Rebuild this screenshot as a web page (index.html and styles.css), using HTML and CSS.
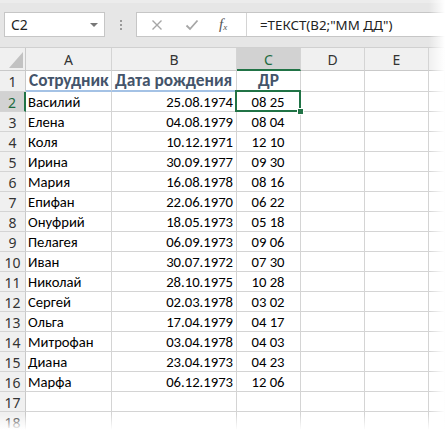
FILE: index.html
```html
<!DOCTYPE html>
<html>
<head>
<meta charset="utf-8">
<link rel="stylesheet" href="styles.css">
</head>
<body>
<div class="app">
  <div class="toolbar">
    <div class="namebox"><span class="nb-text">C2</span><span class="nb-arrow"></span></div>
    <div class="grip"><i></i><i></i><i></i></div>
    <div class="fbar">
      <div class="fbtns">
        <svg class="ico" width="12" height="12" viewBox="0 0 12 12"><path d="M1.5 1.5 L10.5 10.5 M10.5 1.5 L1.5 10.5" stroke="#a6a6a6" stroke-width="1.4" fill="none"/></svg>
        <svg class="ico ok" width="14" height="12" viewBox="0 0 14 12"><path d="M1.5 6.5 L5 10 L12.5 1.5" stroke="#a6a6a6" stroke-width="1.8" fill="none"/></svg>
        <span class="fx"><i>f</i><sub>x</sub></span>
      </div>
      <div class="finput">=ТЕКСТ(B2;"ММ ДД")</div>
    </div>
  </div>
  <div class="sheet">
    <div class="corner"><span class="tri"></span></div><div class="ch">A</div><div class="ch">B</div><div class="ch on">C</div><div class="ch">D</div><div class="ch">E</div><div class="ch"></div>

    <div class="rh">1</div><div class="c hd">Сотрудник</div><div class="c hd">Дата рождения</div><div class="c hd ctr">ДР</div><div class="c"></div><div class="c"></div><div class="c"></div>
    <div class="rh on">2</div><div class="c">Василий</div><div class="c r">25.08.1974</div><div class="c ctr sel">08 25</div><div class="c"></div><div class="c"></div><div class="c"></div>
    <div class="rh">3</div><div class="c">Елена</div><div class="c r">04.08.1979</div><div class="c ctr">08 04</div><div class="c"></div><div class="c"></div><div class="c"></div>
    <div class="rh">4</div><div class="c">Коля</div><div class="c r">10.12.1971</div><div class="c ctr">12 10</div><div class="c"></div><div class="c"></div><div class="c"></div>
    <div class="rh">5</div><div class="c">Ирина</div><div class="c r">30.09.1977</div><div class="c ctr">09 30</div><div class="c"></div><div class="c"></div><div class="c"></div>
    <div class="rh">6</div><div class="c">Мария</div><div class="c r">16.08.1978</div><div class="c ctr">08 16</div><div class="c"></div><div class="c"></div><div class="c"></div>
    <div class="rh">7</div><div class="c">Епифан</div><div class="c r">22.06.1970</div><div class="c ctr">06 22</div><div class="c"></div><div class="c"></div><div class="c"></div>
    <div class="rh">8</div><div class="c">Онуфрий</div><div class="c r">18.05.1973</div><div class="c ctr">05 18</div><div class="c"></div><div class="c"></div><div class="c"></div>
    <div class="rh">9</div><div class="c">Пелагея</div><div class="c r">06.09.1973</div><div class="c ctr">09 06</div><div class="c"></div><div class="c"></div><div class="c"></div>
    <div class="rh">10</div><div class="c">Иван</div><div class="c r">30.07.1972</div><div class="c ctr">07 30</div><div class="c"></div><div class="c"></div><div class="c"></div>
    <div class="rh">11</div><div class="c">Николай</div><div class="c r">28.10.1975</div><div class="c ctr">10 28</div><div class="c"></div><div class="c"></div><div class="c"></div>
    <div class="rh">12</div><div class="c">Сергей</div><div class="c r">02.03.1978</div><div class="c ctr">03 02</div><div class="c"></div><div class="c"></div><div class="c"></div>
    <div class="rh">13</div><div class="c">Ольга</div><div class="c r">17.04.1979</div><div class="c ctr">04 17</div><div class="c"></div><div class="c"></div><div class="c"></div>
    <div class="rh">14</div><div class="c">Митрофан</div><div class="c r">03.04.1978</div><div class="c ctr">04 03</div><div class="c"></div><div class="c"></div><div class="c"></div>
    <div class="rh">15</div><div class="c">Диана</div><div class="c r">23.04.1973</div><div class="c ctr">04 23</div><div class="c"></div><div class="c"></div><div class="c"></div>
    <div class="rh">16</div><div class="c">Марфа</div><div class="c r">06.12.1973</div><div class="c ctr">12 06</div><div class="c"></div><div class="c"></div><div class="c"></div>
    <div class="rh">17</div><div class="c"></div><div class="c"></div><div class="c"></div><div class="c"></div><div class="c"></div><div class="c"></div>
    <div class="rh">18</div><div class="c"></div><div class="c"></div><div class="c"></div><div class="c"></div><div class="c"></div><div class="c"></div>
  </div>
  <div class="fade-r"></div>
  <div class="fade-b"></div>
</div>
</body>
</html>
```

FILE: styles.css
```css
html, body {
  margin: 0;
  padding: 0;
  background: #ffffff;
}
.app {
  position: relative;
  width: 445px;
  height: 430px;
  overflow: hidden;
  background: #ffffff;
}
.toolbar {
  height: 48px;
  box-sizing: border-box;
  background: #e6e6e6;
  border-top: 3px solid #ececec;
  display: flex;
  align-items: flex-start;
  padding: 9px 0 0 4px;
}
.namebox {
  width: 101px;
  height: 25px;
  box-sizing: border-box;
  background: #fff;
  border: 1px solid #c6c6c6;
  display: flex;
  align-items: center;
  justify-content: space-between;
  padding: 0 6px 0 6px;
}
.nb-text {
  font-family: "Noto Sans", "Open Sans", sans-serif;
  font-size: 14px;
  color: #222;
}
.nb-arrow {
  width: 0;
  height: 0;
  border-left: 4px solid transparent;
  border-right: 4px solid transparent;
  border-top: 4px solid #777;
}
.grip {
  width: 31px;
  height: 25px;
  display: flex;
  flex-direction: column;
  align-items: center;
  justify-content: center;
  gap: 2px;
}
.grip i {
  display: block;
  width: 2px;
  height: 2px;
  background: #9a9a9a;
}
.fbar {
  flex: 1;
  height: 25px;
  box-sizing: border-box;
  background: #fff;
  border: 1px solid #c6c6c6;
  border-right: none;
  display: flex;
  align-items: stretch;
}
.fbtns {
  width: 110px;
  box-sizing: border-box;
  border-right: 1px solid #d4d4d4;
  display: flex;
  align-items: center;
  padding-left: 14px;
}
.ico {
  display: block;
}
.ok {
  margin-left: 22px;
}
.fx {
  margin-left: 20px;
  font-family: "Liberation Serif", serif;
  font-size: 15px;
  color: #555;
  line-height: 1;
}
.fx sub {
  font-size: 9px;
  font-style: italic;
  vertical-align: -1px;
}
.finput {
  flex: 1;
  display: flex;
  align-items: center;
  padding-left: 13px;
  font-family: "Noto Sans", "Open Sans", sans-serif;
  font-size: 13.3px;
  color: #222;
}
.sheet {
  display: grid;
  grid-template-columns: 26px 86px 125px 64px 64px 64px 1fr;
  grid-template-rows: 23px 21px;
  grid-auto-rows: 20px;
  border-top: 1px solid #d0d0d0;
  margin-top: -1px;
}
.corner, .ch, .rh {
  background: #f0f0f0;
  box-sizing: border-box;
  font-family: "Noto Sans", "Open Sans", sans-serif;
  font-size: 14px;
  color: #333;
  display: flex;
  align-items: center;
  justify-content: center;
}
.corner {
  position: relative;
  border-right: 1px solid #c9c9c9;
  border-bottom: 1px solid #c9c9c9;
}
.tri {
  position: absolute;
  right: 2px;
  bottom: 2px;
  width: 0;
  height: 0;
  border-left: 14px solid transparent;
  border-bottom: 16px solid #c2c2c2;
}
.ch {
  border-right: 1px solid #d4d4d4;
  border-bottom: 1px solid #c9c9c9;
  padding-top: 1px;
}
.ch.on {
  background: #d2d2d2;
  color: #1d6b40;
  border-bottom: 2px solid #217346;
}
.rh {
  border-right: 1px solid #c9c9c9;
  border-bottom: 1px solid #d4d4d4;
  padding-top: 1px;
}
.rh.on {
  background: #d2d2d2;
  color: #1d6b40;
  border-right: 2px solid #217346;
}
.c {
  box-sizing: border-box;
  border-right: 1px solid #d4d4d4;
  border-bottom: 1px solid #d4d4d4;
  font-family: "Carlito", "Lato", "Liberation Sans", sans-serif;
  font-size: 14.67px;
  color: #000;
  display: flex;
  align-items: flex-end;
  padding: 0 3px 0 2px;
  white-space: nowrap;
  overflow: visible;
  line-height: 18px;
}
.c.r {
  justify-content: flex-end;
}
.c.ctr {
  justify-content: center;
}
.c.hd {
  font-weight: bold;
  font-size: 17.33px;
  line-height: 20px;
  color: #44546a;
  border-bottom: 2px solid #a4c2e5;
  padding-left: 3px;
}
.sel {
  position: relative;
}
.sel::after {
  content: "";
  position: absolute;
  left: -2px;
  top: -2px;
  right: -1px;
  bottom: -1px;
  border: 2px solid #217346;
}
.sel::before {
  content: "";
  position: absolute;
  right: -4px;
  bottom: -4px;
  width: 5px;
  height: 5px;
  background: #217346;
  border: 1px solid #fff;
  z-index: 2;
}
.fade-r {
  position: absolute;
  top: 0;
  right: 0;
  width: 16px;
  height: 100%;
  background: linear-gradient(to right, rgba(255,255,255,0), #ffffff);
}
.fade-b {
  position: absolute;
  left: 0;
  bottom: 0;
  width: 100%;
  height: 16px;
  background: linear-gradient(to bottom, rgba(255,255,255,0), #ffffff);
}
```
